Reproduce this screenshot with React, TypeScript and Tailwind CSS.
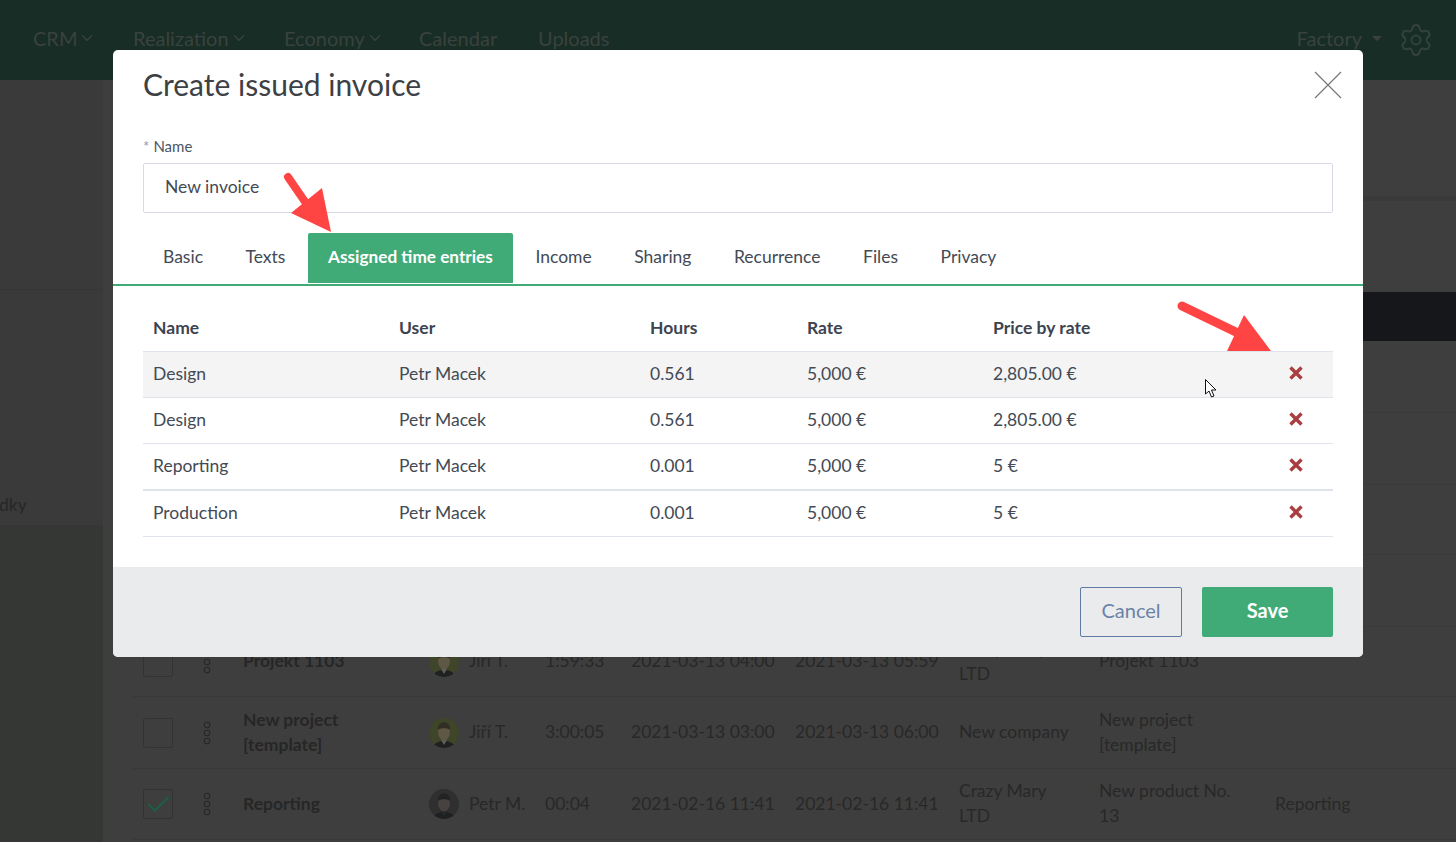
import { Check, ChevronDown, Settings } from "lucide-react";

const navItems = [
  { label: "CRM", chevron: true, className: "w-[100px]" },
  { label: "Realization", chevron: true, className: "w-[151px]" },
  { label: "Economy", chevron: true, className: "w-[135px]" },
  { label: "Calendar", chevron: false, className: "w-[119px]" },
  { label: "Uploads", chevron: false, className: "" },
];

const tabs = ["Basic", "Texts", "Assigned time entries", "Income", "Sharing", "Recurrence", "Files", "Privacy"];

const entries = [
  { name: "Design", hours: "0.561", price: "2,805.00 €", row: "h-[46px] bg-[#f4f4f4] border-b border-[#dfe3ec]" },
  { name: "Design", hours: "0.561", price: "2,805.00 €", row: "h-[46px] border-b border-[#dfe3ec]" },
  { name: "Reporting", hours: "0.001", price: "5 €", row: "h-[47px] border-b-2 border-[#dfe3ec]" },
  { name: "Production", hours: "0.001", price: "5 €", row: "h-[46px] border-b border-[#dfe3ec]" },
];

const cols = ["w-[246px]", "w-[251px]", "w-[157px]", "w-[186px]", "w-[250px]"];

function Avatar({ id, dark }: { id: string; dark?: boolean }) {
  return (
    <svg viewBox="0 0 30 30" className="h-[30px] w-[30px] shrink-0">
      <defs>
        <clipPath id={id}>
          <circle cx="15" cy="15" r="15" />
        </clipPath>
      </defs>
      <g clipPath={`url(#${id})`}>
        <rect width="30" height="30" fill={dark ? "#2f2f2f" : "#3f4529"} />
        <path d="M4 30c1-5 5-7 11-7s10 2 11 7z" fill="#1e2022" />
        <path d="M12 22l3 5 3-5z" fill={dark ? "#282828" : "#5f5f58"} />
        <ellipse cx="15" cy="14" rx="6" ry="8.500" fill={dark ? "#474240" : "#5f5746"} />
        <path d="M9 12C8.500 7 11 4.500 15 4.500S21.500 7 21 12c-2-2.500-10-2.500-12 0z" fill={dark ? "#242323" : "#312e23"} />
      </g>
    </svg>
  );
}

function Dots() {
  return (
    <svg viewBox="0 0 8 24" className="h-6 w-2 shrink-0" fill="none" stroke="#252827" strokeWidth="1.100">
      <circle cx="4" cy="4" r="2.800" />
      <circle cx="4" cy="12" r="2.800" />
      <circle cx="4" cy="20" r="2.800" />
    </svg>
  );
}

function BgRow({
  id,
  name,
  user,
  time,
  start,
  end,
  company,
  project,
  last,
  checked,
  dark,
  height,
}: {
  id: string;
  name: string;
  user: string;
  time: string;
  start: string;
  end: string;
  company: string;
  project: string;
  last?: string;
  checked?: boolean;
  dark?: boolean;
  height: string;
}) {
  return (
    <div className={`flex ${height} items-center border-b border-[#383838] pl-[10px] text-[17.5px] leading-[25px] text-[#282828]`}>
      <div className="mr-[30px] flex h-[30px] w-[30px] shrink-0 items-center justify-center rounded-[2px] border border-[#333]">
        {checked ? <Check className="h-[29px] w-[29px] shrink-0 text-[#1d5f43]" strokeWidth={1.700} /> : null}
      </div>
      <div className="mr-[32px]">
        <Dots />
      </div>
      <div className="w-[186px] shrink-0 pb-[2px] pr-[20px] font-bold text-[#262626]">{name}</div>
      <Avatar id={id} dark={dark} />
      <div className="ml-[10px] w-[76px] shrink-0 pb-[2px]">{user}</div>
      <div className="w-[86px] shrink-0 pb-[2px]">{time}</div>
      <div className="w-[164px] shrink-0 pb-[2px]">{start}</div>
      <div className="w-[164px] shrink-0 pb-[2px]">{end}</div>
      <div className="w-[140px] shrink-0 pb-[2px] pr-[20px]">{company}</div>
      <div className="w-[176px] shrink-0 pb-[2px] pr-[20px]">{project}</div>
      <div className="pb-[2px]">{last}</div>
    </div>
  );
}

function RemoveIcon() {
  return (
    <svg viewBox="0 0 14 14" className="mb-[3px] h-[14px] w-[14px]" stroke="#a83e40" strokeWidth="3.400" strokeLinecap="butt">
      <path d="M1.500 1.500l11 11M12.500 1.500l-11 11" />
    </svg>
  );
}

export default function App() {
  return (
    <div className="relative h-[842px] w-[1456px] overflow-hidden bg-[#3e3e3e] font-[Lato,sans-serif]">
      {/* Page behind the dialog */}
      <header className="flex h-20 items-center bg-[#182d25] pb-[4px] pl-[33px] pr-[22px] text-[20px] text-[#39423e]">
        {navItems.map((item) => (
          <div key={item.label} className={`flex items-center ${item.className}`}>
            {item.label}
            {item.chevron ? <ChevronDown className="ml-[1px] h-[18px] w-[18px]" strokeWidth={1.800} /> : null}
          </div>
        ))}
        <div className="ml-auto flex items-center">
          Factory
          <div className="ml-[10px] h-0 w-0 border-x-[5px] border-t-[5px] border-x-transparent border-t-[#39423e]" />
          <Settings className="ml-[16px] mt-[3px] h-9 w-9 text-[#33423c]" strokeWidth={1.300} />
        </div>
      </header>

      <div className="flex h-[762px]">
        <aside className="flex w-[103px] shrink-0 flex-col bg-[#3a3a3a]">
          <div className="h-[210px] border-b border-[#363636]" />
          <div className="flex h-[235px] items-end pb-[7px] text-[17.5px] text-[#272727]">
            <span className="-ml-[1px]">dky</span>
          </div>
          <div className="flex-1 bg-[#353735]" />
        </aside>
        <main className="flex-1 pl-[30px]">
          <div className="h-[116px]" />
          <div className="h-[5px] bg-[#3a3a3a]" />
          <div className="h-[91px]" />
          <div className="h-[49px] bg-[#16171a]" />
          <div className="h-[72px] border-b border-[#3a3a3a]" />
          <div className="h-[72px] border-b border-[#3a3a3a]" />
          <div className="h-[70px] border-b border-[#3a3a3a]" />
          <div className="h-[72px] border-b border-[#3a3a3a]" />
          <BgRow
            id="avatar-1"
            height="h-[70px]"
            name="Projekt 1103"
            user="Jiří T."
            time="1:59:33"
            start="2021-03-13 04:00"
            end="2021-03-13 05:59"
            company="Crazy Mary LTD"
            project="Projekt 1103"
          />
          <BgRow
            id="avatar-2"
            height="h-[72px]"
            name="New project [template]"
            user="Jiří T."
            time="3:00:05"
            start="2021-03-13 03:00"
            end="2021-03-13 06:00"
            company="New company"
            project="New project [template]"
          />
          <BgRow
            id="avatar-3"
            height="h-[71px]"
            name="Reporting"
            user="Petr M."
            time="00:04"
            start="2021-02-16 11:41"
            end="2021-02-16 11:41"
            company="Crazy Mary LTD"
            project="New product No. 13"
            last="Reporting"
            checked
            dark
          />
        </main>
      </div>

      {/* Dialog */}
      <div className="absolute left-[113px] top-[50px] flex h-[607px] w-[1250px] flex-col overflow-hidden rounded-[5px] bg-white text-[#434a54]">
        <div className="flex-1">
          <div className="flex h-[70px] items-center justify-between pl-[30px] pr-[21px]">
            <h1 className="pb-[3px] text-[30px] leading-[40px] text-[#3d4045]">Create issued invoice</h1>
            <svg viewBox="0 0 28 28" className="h-7 w-7" stroke="#777" strokeWidth="1.200">
              <path d="M1 1l26 26M27 1L1 27" />
            </svg>
          </div>
          <div className="px-[30px] pt-[16px]">
            <label className="block text-[15px] leading-[20px] text-[#4b5563]">
              <span className="mr-[4px] text-[#999]">*</span>Name
            </label>
            <div className="mt-[7px] flex h-[50px] items-center rounded-[2px] border border-[#d5dae5] pb-[1px] pl-[21px] text-[17.5px] text-[#434a54]">
              New invoice
            </div>
          </div>
          <nav className="mt-[20px] flex h-[53px] gap-[2.5px] border-b-2 border-[#41ab77] pl-[30px] text-[17.5px]">
            {tabs.map((tab) =>
              tab === "Assigned time entries" ? (
                <div key={tab} className="flex h-[50px] w-[205px] items-center justify-center rounded-t-[2px] bg-[#41ab77] pb-[2px] text-[17.2px] font-bold text-white">
                  {tab}
                </div>
              ) : (
                <div key={tab} className="flex h-[50px] items-center px-[20px] pb-[2px]">
                  {tab}
                </div>
              )
            )}
          </nav>
          <div className="px-[30px]">
            <div className="flex h-[66px] items-center border-b border-[#dfe3ec] pb-[7px] pl-[10px] pt-[26px] text-[17.5px] font-bold text-[#3d4450]">
              {["Name", "User", "Hours", "Rate", "Price by rate"].map((title, i) => (
                <div key={title} className={cols[i]}>
                  {title}
                </div>
              ))}
            </div>
            {entries.map((entry, i) => (
              <div key={i} className={`flex items-center pb-[1px] pl-[10px] text-[17.5px] ${entry.row}`}>
                <div className={cols[0]}>{entry.name}</div>
                <div className={cols[1]}>Petr Macek</div>
                <div className={cols[2]}>{entry.hours}</div>
                <div className={cols[3]}>5,000 €</div>
                <div className={cols[4]}>{entry.price}</div>
                <div className="ml-[46px]">
                  <RemoveIcon />
                </div>
              </div>
            ))}
          </div>
        </div>
        <footer className="flex h-[90px] items-center justify-end gap-[20px] bg-[#eaebed] pr-[30px] text-[20px]">
          <button className="h-[50px] w-[102px] rounded-[2px] border border-[#5f7aa3] pb-[4px] text-[#6b82a8]">Cancel</button>
          <button className="h-[50px] w-[131px] rounded-[2px] bg-[#41ab77] pb-[4px] font-bold text-white">Save</button>
        </footer>
      </div>

      {/* Annotation arrows */}
      <svg className="absolute left-[280px] top-[170px] h-[65px] w-[56px]" viewBox="280 170 56 65">
        <path d="M288 177L310 209" stroke="#ff4444" strokeWidth="8" strokeLinecap="round" />
        <path d="M291 213L322 188L331 232Z" fill="#ff4444" />
      </svg>
      <svg className="absolute left-[1175px] top-[298px] h-[53px] w-[100px]" viewBox="1175 298 100 53">
        <path d="M1182 306L1240 334" stroke="#ff4444" strokeWidth="9" strokeLinecap="round" />
        <path d="M1244 315L1271 351H1227Z" fill="#ff4444" />
      </svg>

      {/* Mouse cursor */}
      <svg className="absolute left-[1204px] top-[378px] h-[22px] w-[14px]" viewBox="0 0 14 22">
        <path d="M1.500 1.500V16l3.500-3 2.500 6 2.500-1-2.500-6h4.500z" fill="#fff" stroke="#111" strokeWidth="1" strokeLinejoin="round" />
      </svg>
    </div>
  );
}
